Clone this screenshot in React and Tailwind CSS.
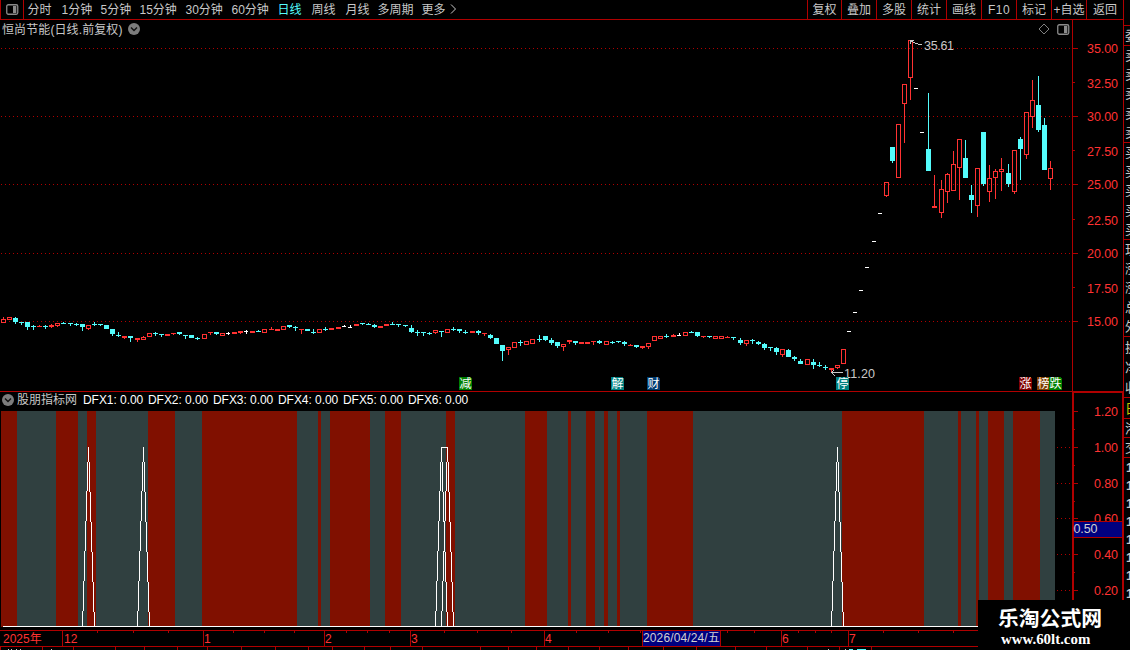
import React from "react";

const RED = "#ff3232";
const CYAN = "#54fcfc";
const WHITE = "#ffffff";
const LINE = "#b00000";
const FONT = '"Liberation Sans","Noto Sans CJK SC",sans-serif';

// [center x, high, body top, body bottom, low, kind]
// h: hollow red, r: solid red, c: solid cyan, w: white
const candles = [
  [3,317,319,323,323,"h"],[9,317,317,320,320,"h"],[15,317,318,322,324,"c"],[21,322,322,323,325,"c"],
  [27,322,322,327,330,"c"],[33,325,326,327,330,"c"],[39,325,326,327,327,"r"],[45,325,326,327,329,"c"],
  [51,324,325,327,328,"r"],[57,323,323,326,327,"h"],[63,322,323,324,324,"c"],[70,323,323,324,326,"c"],
  [76,323,324,325,326,"c"],[82,324,324,327,331,"c"],[88,325,325,329,330,"h"],[94,322,324,325,326,"c"],
  [100,324,324,325,326,"c"],[106,325,325,329,329,"c"],[112,329,329,334,336,"c"],[118,332,335,336,337,"c"],
  [124,336,336,338,339,"r"],[130,336,336,338,342,"c"],[137,338,338,340,342,"r"],[143,336,337,340,340,"h"],
  [149,333,333,337,337,"h"],[155,332,333,334,336,"c"],[161,334,334,335,337,"c"],[167,334,334,336,336,"r"],
  [173,333,333,334,335,"r"],[179,332,332,334,335,"c"],[185,335,335,336,339,"c"],[191,335,335,338,338,"c"],
  [197,337,338,339,340,"c"],[204,334,334,339,339,"h"],[210,332,332,333,335,"r"],[216,332,332,334,335,"c"],
  [222,333,333,336,336,"h"],[228,332,333,334,335,"w"],[234,332,332,334,334,"r"],[240,331,331,333,334,"r"],
  [246,330,331,332,334,"w"],[252,331,331,333,333,"r"],[258,330,331,332,332,"c"],[264,329,329,333,333,"h"],
  [271,327,329,330,330,"r"],[277,329,329,331,331,"r"],[283,326,326,330,330,"h"],[289,325,325,327,328,"c"],
  [295,326,327,328,331,"c"],[301,329,329,330,334,"r"],[307,329,329,331,331,"c"],[313,329,332,333,334,"c"],
  [319,329,329,333,333,"h"],[325,327,329,330,331,"c"],[331,328,328,330,330,"r"],[338,327,327,329,329,"r"],
  [344,325,326,327,327,"w"],[350,325,327,328,328,"w"],[356,324,324,326,326,"r"],[362,323,323,324,325,"c"],
  [368,323,324,325,325,"c"],[374,324,325,327,328,"c"],[380,326,326,328,328,"r"],[386,324,324,326,326,"r"],
  [392,322,324,325,325,"c"],[398,324,324,325,327,"c"],[405,325,325,326,327,"c"],[411,325,328,332,333,"c"],
  [417,330,332,333,336,"c"],[423,332,332,333,336,"c"],[429,332,333,334,335,"c"],[435,330,330,333,334,"h"],
  [441,331,331,332,337,"c"],[447,329,329,333,333,"h"],[453,327,329,330,331,"c"],[459,329,329,331,333,"c"],
  [465,330,332,333,334,"c"],[472,331,331,333,333,"r"],[478,330,331,333,335,"c"],[484,333,333,334,336,"r"],
  [490,334,335,338,339,"c"],[496,338,338,344,344,"c"],[502,345,345,351,361,"c"],[508,347,347,350,355,"h"],
  [514,342,342,348,348,"h"],[520,340,342,343,346,"c"],[526,341,341,345,345,"h"],[532,339,339,344,344,"h"],
  [539,335,339,340,342,"c"],[545,336,336,340,341,"c"],[551,338,340,343,345,"c"],[557,342,342,346,348,"c"],
  [563,344,344,347,351,"h"],[569,340,340,342,344,"r"],[575,341,341,343,345,"c"],[581,342,342,344,344,"r"],
  [587,342,342,344,344,"r"],[593,341,341,342,345,"r"],[599,340,341,343,344,"c"],[606,341,341,345,345,"h"],
  [612,341,342,343,344,"c"],[618,341,341,342,343,"c"],[624,341,342,344,346,"c"],[630,344,345,346,346,"r"],
  [636,345,345,347,348,"c"],[642,346,346,348,349,"r"],[648,343,343,347,349,"h"],[654,336,336,341,341,"h"],
  [660,336,336,339,339,"h"],[666,334,336,337,338,"c"],[673,334,335,337,337,"r"],[679,333,335,336,336,"w"],
  [685,332,332,336,336,"h"],[691,331,332,333,333,"c"],[697,332,332,336,337,"c"],[703,336,336,337,338,"r"],
  [709,336,336,337,338,"c"],[715,336,336,339,339,"h"],[721,336,336,339,339,"h"],[727,336,337,338,338,"r"],
  [733,337,337,338,340,"c"],[740,338,340,343,345,"c"],[746,340,340,344,346,"h"],[752,339,340,341,344,"c"],
  [758,341,342,344,345,"c"],[764,343,344,348,350,"c"],[770,347,347,348,351,"c"],[776,347,348,352,355,"c"],
  [782,349,349,355,357,"h"],[788,349,350,357,357,"c"],[794,356,357,359,361,"c"],[800,359,361,364,364,"c"],
  [807,359,359,365,365,"h"],[813,359,362,365,369,"c"],[819,362,365,366,367,"c"],[825,365,367,368,370,"c"],
  [831,368,368,370,372,"r"],[837,365,365,368,369,"h"],[843,349,349,364,364,"h"],[849,331,331,332,332,"w"],
  [855,312,312,313,313,"w"],[861,290,290,291,291,"w"],[867,267,267,268,268,"w"],[874,241,241,242,242,"w"],
  [880,213,213,214,214,"w"],[886,182,182,196,197,"h"],[892,147,147,161,163,"c"],[898,124,124,178,178,"h"],
  [904,84,84,104,143,"h"],[910,40,40,78,100,"h"],[916,88,88,89,89,"w"],[922,132,132,133,133,"w"],
  [928,93,149,171,171,"c"],[934,175,206,208,208,"r"],[941,180,189,213,218,"h"],[947,173,174,192,203,"h"],
  [953,151,164,191,191,"h"],[959,139,139,168,200,"h"],[965,140,158,178,178,"c"],[971,185,195,200,213,"c"],
  [977,168,168,206,217,"h"],[983,132,132,184,186,"c"],[989,165,178,192,202,"h"],[995,169,171,178,199,"h"],
  [1001,158,169,172,191,"h"],[1008,164,173,184,187,"c"],[1014,150,150,192,194,"h"],[1020,137,139,149,180,"c"],
  [1026,112,112,155,159,"h"],[1032,80,100,117,128,"h"],[1038,76,105,130,132,"c"],[1044,118,125,170,170,"c"],
  [1050,161,168,179,190,"h"],
];

const gridYs = [48, 116, 184, 253, 321];
const priceLabels = [
  [48.7, "35.00"],[83.7, "32.50"],[116.7, "30.00"],[151.7, "27.50"],[184.7, "25.00"],
  [220.7, "22.50"],[253.7, "20.00"],[288.7, "17.50"],[321.7, "15.00"],
];
const bands = [
  [1,17],[56,78],[87,96],[148,175],[202,297],[318,321],[330,370],[385,401],[446,455],[525,547],
  [568,571],[586,595],[604,608],[617,620],[647,693],[842,924],[958,961],[976,979],[988,1004],[1013,1040],
];
const badges = [
  [459, "减", "#008000"],[611, "解", "#008080"],[647, "财", "#003c70"],[836, "停", "#008080"],
  [1019, "涨", "#800000"],[1037, "榜", "#804000"],[1049, "跌", "#008000"],
];
const indLabels = [[411.7, "1.20"],[447.7, "1.00"],[483.7, "0.80"],[518.7, "0.60"],[554.7, "0.40"],[590.7, "0.20"]];

function Candle({ d }) {
  const [cx, hi, top, bot, lo, k] = d;
  const color = k === "c" ? CYAN : k === "w" ? WHITE : RED;
  const x = cx - 2;
  const w = k === "w" ? 4 : 5;
  return (
    <g fill={color}>
      {hi < top && <rect x={cx} y={hi} width="1" height={top - hi} />}
      {k === "h" ? (
        <path fillRule="evenodd" d={`M${x} ${top}h5v${bot - top}h-5zM${x + 1} ${top + 1}v${bot - top - 2}h3v${top + 2 - bot}z`} />
      ) : (
        <rect x={x} y={top} width={w} height={bot - top} />
      )}
      {lo > bot && <rect x={cx} y={bot} width="1" height={lo - bot} />}
    </g>
  );
}

function PanelIcon() {
  return (
    <svg className="h-[11px] w-[13px] shrink-0" viewBox="0 0 13 11">
      <rect x=".75" y=".75" width="11" height="9.5" rx="1.5" fill="none" stroke="#8a8a8a" strokeWidth="1.3" />
      <rect x="7" y="2" width="3.3" height="7" fill="#8a8a8a" />
    </svg>
  );
}

function CircleChevron() {
  return (
    <svg className="h-3 w-3 shrink-0" viewBox="0 0 12 12">
      <circle cx="6" cy="6" r="6" fill="#7c7c7c" />
      <path d="M3 4.6 6 7.6 9 4.6" fill="none" stroke="#101010" strokeWidth="1.4" />
    </svg>
  );
}

const periods = [
  ["分时", "w-[34px]"],["1分钟", "w-[39px]"],["5分钟", "w-[39px]"],["15分钟", "w-[46px]"],
  ["30分钟", "w-[46px]"],["60分钟", "w-[46px]"],["日线", "w-[34px] text-[#54fcfc]"],["周线", "w-[34px]"],
  ["月线", "w-[32px]"],["多周期", "w-[44px]"],["更多", "w-[28px]"],
];
const tools = [
  ["复权", "w-[34px]"],["叠加", "w-[35px]"],["多股", "w-[35px]"],["统计", "w-[35px]"],["画线", "w-[35px]"],
  ["F10", "w-[35px] tracking-[0.5px]"],["标记", "w-[35px]"],["+自选", "w-[35px]"],["返回", "w-[37px]"],
];

function Toolbar() {
  return (
    <div className="flex h-5 w-[1124px] shrink-0 border-b border-r border-[#b00000] text-[#c8c8c8]">
      <div className="flex w-6 shrink-0 items-center justify-center border-x border-[#b00000]">
        <PanelIcon />
      </div>
      <div className="flex flex-1 items-center pl-[3.5px] leading-[18px]">
        {periods.map(([t, c]) => (
          <span key={t} className={"shrink-0 whitespace-nowrap " + c}>{t}</span>
        ))}
        <svg className="-mt-px h-[10px] w-[8px]" viewBox="0 0 8 10">
          <path d="M1 .5 5.5 5 1 9.5" fill="none" stroke="#c8c8c8" />
        </svg>
      </div>
      {tools.map(([t, c]) => (
        <div key={t} className={"flex shrink-0 items-center justify-center whitespace-nowrap border-l border-[#b00000] leading-[18px] " + c}>{t}</div>
      ))}
    </div>
  );
}

function PriceChart() {
  return (
    <svg className="block h-[353px] w-[1072px]" viewBox="0 38 1072 353" shapeRendering="crispEdges">
      {gridYs.map((y) => (
        <line key={y} x1="1" x2="1072" y1={y + 0.5} y2={y + 0.5} stroke="#b00000" strokeDasharray="1 3" />
      ))}
      {candles.map((d) => <Candle key={d[0]} d={d} />)}
      <g fill="#c8c8c8">
        <path d="M918 44h4v1h-4zM915 43h3v1h-3zM913 42h2v1h-2zM911 41h2v1h-2zM910 40h4v1h-4zM910 40h1v4h-1z" />
        <path d="M831 372h12v1h-12zM832 371h1v3h-1zM833 370h1v1h-1zM833 374h1v1h-1zM834 375h1v1h-1z" />
      </g>
      <g fill="#c8c8c8" fontFamily={FONT} fontSize="12.5">
        <text x="924" y="50" textLength="30">35.61</text>
        <text x="844" y="378" textLength="31">11.20</text>
      </g>
      {badges.map(([x, t, c]) => (
        <g key={t}>
          <path d={`M${x} 377h11l2 2v11h-13z`} fill={c} />
          <text x={x + 0.5} y="388" fontSize="12" fill="#fff" fontFamily={FONT}>{t}</text>
        </g>
      ))}
    </svg>
  );
}

function PriceAxis() {
  return (
    <svg className="block h-[371px] w-[52px] shrink-0" viewBox="1072 20 52 371" shapeRendering="crispEdges">
      <g fill={LINE}>
        <rect x="1072" y="20" width="1" height="371" />
        <rect x="1123" y="20" width="1" height="371" />
        {gridYs.map((y) => <rect key={y} x="1073" y={y} width="5" height="1" />)}
        {[82, 150, 219, 287].map((y) => <rect key={y} x="1073" y={y} width="2" height="1" />)}
      </g>
      <g fill={RED} fontFamily={FONT} fontSize="12.5">
        {priceLabels.map(([y, t]) => <text key={t} x="1087" y={y + 4.5} textLength="31">{t}</text>)}
      </g>
    </svg>
  );
}

function IndicatorChart() {
  return (
    <svg className="block h-[219px] w-[1072px]" viewBox="0 411 1072 219" shapeRendering="crispEdges">
      <rect x="1" y="411" width="1054" height="216" fill="#304040" />
      {bands.map(([a, b]) => <rect key={a} x={a} y="411" width={b - a} height="216" fill="#801000" />)}
      {[447, 483, 518, 554, 590].map((y) => (
        <line key={y} x1="1057" x2="1072" y1={y + 0.5} y2={y + 0.5} stroke="#b00000" strokeDasharray="1 3" />
      ))}
      <g fill="none" stroke="#fff">
        <path d="M3 626.5H1055" />
        {[88, 143, 441, 447, 837].map((x) => (
          <path key={x} d={`M${x - 5.5} 626.5 ${x + 0.5} 447 ${x + 6.5} 626.5`} strokeLinejoin="bevel" />
        ))}
        <path d="M441 447.5H448" />
      </g>
    </svg>
  );
}

function IndicatorAxis() {
  return (
    <svg className="block h-[239px] w-[52px] shrink-0" viewBox="1072 391 52 239" shapeRendering="crispEdges">
      <g fill={RED} fontFamily={FONT} fontSize="12.5">
        {indLabels.map(([y, t]) => <text key={t} x="1094" y={y + 4.5} textLength="24">{t}</text>)}
      </g>
      <g fill={LINE}>
        <rect x="1072" y="391" width="52" height="2" />
        <rect x="1072" y="391" width="2" height="239" />
        <rect x="1122" y="391" width="2" height="239" />
        {[411, 447, 483, 518, 554, 590].map((y) => <rect key={y} x="1074" y={y} width="4" height="1" />)}
        {[429, 465, 501, 572].map((y) => <rect key={y} x="1074" y={y} width="1" height="1" />)}
        <rect x="1074" y="521" width="48" height="17" />
      </g>
      <rect x="1074" y="522" width="48" height="15" fill="#000080" />
      <text x="1073.5" y="533" textLength="24" fontSize="12.5" fill="#d0d0d0" fontFamily={FONT}>0.50</text>
    </svg>
  );
}

const months = [
  ["2025年", "w-[62px] pl-[3px]"],["12", "w-[141px] border-l pl-px"],["1", "w-[121px] border-l"],["2", "w-[86px] border-l"],
  ["3", "w-[134px] border-l"],["4", "w-[98px] border-l"],
];
const upperTicks = [97,133,168,233,264,294,346,367,389,444,477,511,576,608,640,727,754,798,815,831,883,918,953];
const lowerTicks = [0,42,73,115,144,177,207,241,275,308,332,364,390,422,480,508,536,568,599,628,663,696,735,766,807,839,871];

function DateAxis() {
  return (
    <div className="relative h-5 w-[1124px] shrink-0">
      <div className="flex h-[17px] border-y border-[#b00000] text-[12px] leading-[16px] text-[#ff3232]">
        {months.map(([t, c]) => (
          <span key={t} className={"shrink-0 whitespace-nowrap border-[#b00000] " + c}>{t}</span>
        ))}
        <span className="w-[79px] shrink-0 whitespace-nowrap border-x border-[#b00000] bg-[#000080] leading-[14px] tracking-[0.12px] text-[#d0d0d0]">2026/04/24/五</span>
        <span className="w-[60px] shrink-0" />
        <span className="w-[67px] shrink-0 border-l border-[#b00000]">6</span>
        <span className="flex-1 border-l border-[#b00000]">7</span>
      </div>
      <svg className="absolute left-0 top-0 h-5 w-[1124px]" viewBox="0 630 1124 20" shapeRendering="crispEdges">
        <g fill={LINE}>
          {upperTicks.map((x) => <rect key={x} x={x} y="631" width="1" height="2" />)}
          {lowerTicks.map((x) => <rect key={x} x={x} y="647" width="1" height="3" />)}
        </g>
        <g fill="#c8c8c8">
          {[8, 11, 16, 20, 51, 828, 845].map((x) => <rect key={x} x={x} y="649" width="1" height="1" />)}
        </g>
        <path d="M849 649.5h4M857 649.5h9" stroke={CYAN} />
      </svg>
    </div>
  );
}

const clipped = "w-4 shrink-0 whitespace-nowrap";

function SideStrip() {
  const group = (chars, key, cls) => (
    <div key={key} className={"flex shrink-0 flex-col justify-around overflow-hidden border-b border-[#b00000] pl-px leading-none " + cls}>
      {chars.split("").map((c, i) => <span key={i} className={clipped}>{c}</span>)}
    </div>
  );
  return (
    <div className="flex w-[6px] shrink-0 flex-col overflow-hidden text-[13px] text-[#c8c8c8]">
      <div className="h-[26px] shrink-0 border-b border-[#b00000]" />
      {group("委", "a", "h-5")}
      {group("卖卖卖卖卖", "b", "h-[97px]")}
      {group("买买买买买", "c", "h-[97px]")}
      {group("现涨涨总外", "d", "h-[97px]")}
      {group("换净收", "e", "h-[61px]")}
      {group("日", "f", "h-[21px] text-[#c8c800]")}
      {group("港", "g", "h-[19px]")}
      {group("交", "h", "h-[20px]")}
      <div className="flex flex-col pl-[2px]">
        {[0, 1, 2, 3, 4, 5, 6, 7].map((i) => <span key={i} className="h-[18px] w-4 shrink-0 font-bold leading-[20px]">1</span>)}
      </div>
    </div>
  );
}

export default function App() {
  return (
    <div className="relative flex h-[650px] w-[1130px] overflow-hidden bg-black font-['Liberation_Sans','Noto_Sans_CJK_SC',sans-serif] text-[12px]">
      <div className="flex w-[1124px] shrink-0 flex-col">
        <Toolbar />
        <div className="flex h-[371px] shrink-0">
          <div className="flex w-[1072px] shrink-0 flex-col">
            <div className="flex h-[18px] shrink-0 items-center pl-[2px] text-[#c8c8c8]">
              <span className="w-[126px] whitespace-nowrap pt-px leading-[18px] tracking-[0.1px]">恒尚节能(日线.前复权)</span>
              <CircleChevron />
              <svg className="ml-auto h-3 w-3" viewBox="0 0 12 12">
                <path d="M6 1 11 6 6 11 1 6Z" fill="none" stroke="#808080" />
              </svg>
              <div className="ml-[7px] mr-[2px] flex"><PanelIcon /></div>
            </div>
            <PriceChart />
          </div>
          <PriceAxis />
        </div>
        <div className="flex h-[239px] shrink-0">
          <div className="flex w-[1072px] shrink-0 flex-col border-t border-[#b00000]">
            <div className="flex h-[19px] shrink-0 items-center pb-[3px] pl-[2px] leading-[16px] text-white">
              <CircleChevron />
              <span className="ml-[3px] w-[66px] whitespace-nowrap text-[#c8c8c8]">股朋指标网</span>
              {[1, 2, 3, 4, 5, 6].map((n) => (
                <span key={n} className="w-[65px] whitespace-nowrap tracking-[-0.05px]">DFX{n}: 0.00</span>
              ))}
            </div>
            <IndicatorChart />
          </div>
          <IndicatorAxis />
        </div>
        <DateAxis />
      </div>
      <SideStrip />
      <div className="absolute bottom-0 right-0 flex h-[50px] w-[152px] flex-col bg-black pt-[7px] text-white">
        <span className="whitespace-nowrap pl-[20px] text-[20.8px] font-bold leading-[24px]">乐淘公式网</span>
        <span className="whitespace-nowrap pl-[23px] font-['Liberation_Serif',serif] text-[14.9px] font-bold leading-[16px]">www.60lt.com</span>
      </div>
    </div>
  );
}
